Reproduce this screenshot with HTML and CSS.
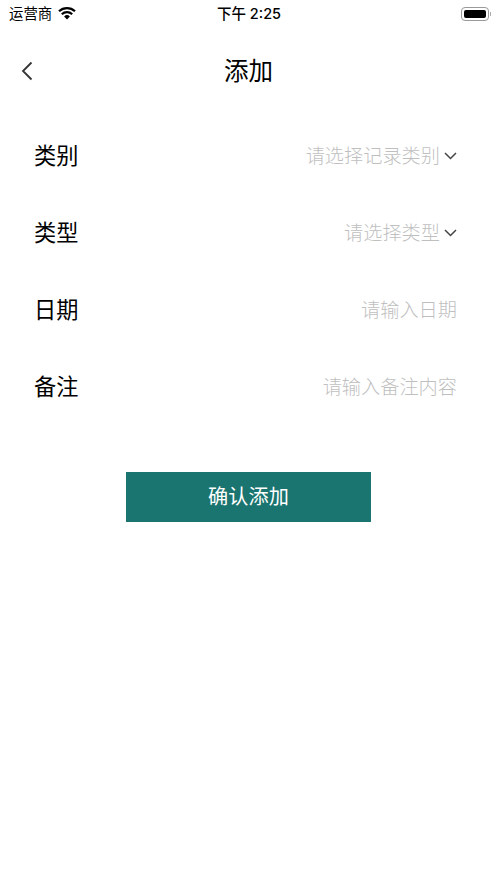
FILE: index.html
```html
<!DOCTYPE html>
<html lang="zh-CN">
<head>
    <meta charset="UTF-8">
    <meta name="viewport" content="width=device-width, initial-scale=1.0">
    <title>添加</title>
    <link rel="stylesheet" href="styles.css">
</head>
<body>
    <div class="statusbar">
        <div class="carrier">
            <span class="carrier-name">运营商</span>
            <svg class="wifi" width="18" height="13" viewBox="0 0 18 13">
                <path d="M9 12.6 6.1 9.5a4.2 4.2 0 0 1 5.8 0z" fill="#000"/>
                <path d="M1 4.3a11.8 11.8 0 0 1 16 0" fill="none" stroke="#000" stroke-width="2.2"/>
                <path d="M3.8 7.2a7.7 7.7 0 0 1 10.4 0" fill="none" stroke="#000" stroke-width="2.2"/>
            </svg>
        </div>
        <div class="time">下午 2:25</div>
        <div class="battery"><div class="battery-body"><div class="battery-level"></div></div><div class="battery-cap"></div></div>
    </div>

    <div class="navbar">
        <svg class="back" width="14" height="20" viewBox="0 0 14 20">
            <path d="M11.5 1.5 3 10l8.5 8.5" fill="none" stroke="#333" stroke-width="1.8"/>
        </svg>
        <div class="title">添加</div>
    </div>

    <div class="form">
        <div class="row">
            <span class="label">类别</span>
            <span class="value">请选择记录类别
                <svg class="arrow" width="13" height="8" viewBox="0 0 13 8"><path d="M1 1 6.5 6.5 12 1" fill="none" stroke="#444" stroke-width="1.5"/></svg>
            </span>
        </div>
        <div class="row">
            <span class="label">类型</span>
            <span class="value">请选择类型
                <svg class="arrow" width="13" height="8" viewBox="0 0 13 8"><path d="M1 1 6.5 6.5 12 1" fill="none" stroke="#444" stroke-width="1.5"/></svg>
            </span>
        </div>
        <div class="row">
            <span class="label">日期</span>
            <span class="value">请输入日期</span>
        </div>
        <div class="row">
            <span class="label">备注</span>
            <span class="value">请输入备注内容</span>
        </div>
    </div>

    <div class="submit">
        <div class="btn">确认添加</div>
    </div>
</body>
</html>
```

FILE: styles.css
```css
body {
    margin: 0;
    height: 883px;
    overflow: hidden;
    background-color: #fff;
    color: #000;
    font-family: "Noto Sans CJK SC", "Liberation Sans", sans-serif;
}
.statusbar {
    display: grid;
    grid-template-columns: 1fr auto 1fr;
    align-items: center;
    height: 25px;
    padding: 0 6px 0 9px;
    font-size: 14.4px;
}
.carrier {
    display: flex;
    align-items: center;
    gap: 6px;
    line-height: 25px;
}
.carrier-name {
    margin-bottom: 2px;
}
.time {
    margin-left: -2px;
    font-family: "Inter", "Noto Sans CJK SC", sans-serif;
    font-weight: 500;
    font-size: 14.5px;
    line-height: 25px;
}
.battery {
    display: flex;
    align-items: center;
    justify-self: end;
    gap: 1px;
}
.battery-body {
    padding: 2px;
    border: 1px solid #9a9a9a;
    border-radius: 4px;
}
.battery-level {
    width: 22px;
    height: 8px;
    border-radius: 2px;
    background-color: #000;
}
.battery-cap {
    width: 1.5px;
    height: 4px;
    background-color: #aaa;
}
.navbar {
    display: flex;
    align-items: center;
    justify-content: center;
    position: relative;
    height: 89px;
}
.title {
    font-size: 24.5px;
}
.back {
    position: absolute;
    left: 20px;
    top: 36px;
}
.form {
    padding: 2px 40px 0 34px;
}
.row {
    display: flex;
    align-items: center;
    justify-content: space-between;
    height: 77px;
}
.label {
    margin-bottom: 2px;
    font-size: 22.2px;
}
.value {
    display: flex;
    align-items: center;
    gap: 4px;
    font-size: 19.2px;
    font-weight: 300;
    color: #bfbfbf;
}
.arrow {
    flex-shrink: 0;
    margin-top: 2px;
}
.submit {
    display: flex;
    justify-content: center;
    padding-top: 48px;
}
.btn {
    width: 245px;
    height: 50px;
    line-height: 48px;
    text-align: center;
    font-size: 20.2px;
    color: #fff;
    background-color: #1a746f;
}
```
